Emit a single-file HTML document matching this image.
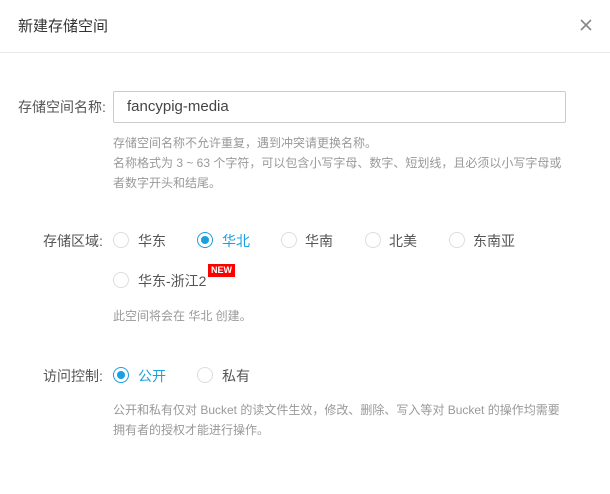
<!DOCTYPE html>
<html><head><meta charset="utf-8"><style>
*{margin:0;padding:0;box-sizing:border-box}
body{width:610px;height:494px;background:#fff;position:relative;overflow:hidden;font-family:"Liberation Sans","Noto Sans CJK SC",sans-serif;color:#333}
.a{position:absolute;white-space:nowrap}
.t{font-size:15px;color:#333;left:18px;top:15px}
.hr{position:absolute;left:0;top:52px;width:610px;height:1px;background:#e8e8e8}
.lbl{font-size:14px;color:#555}
.inp{position:absolute;left:113px;top:91px;width:453px;height:32px;border:1px solid #ccc;border-radius:2px;font-size:15px;color:#444;padding:0 13px;line-height:30px}
.help{font-size:12px;color:#999;line-height:20px}
.r{position:absolute;width:16px;height:16px;border:1px solid #ddd;border-radius:50%}
.r.on{border-color:#1a9fe0}
.r.on:after{content:"";position:absolute;left:3px;top:3px;width:8px;height:8px;border-radius:50%;background:#1a9fe0}
.rl{font-size:14px;color:#555}
.blue{color:#1a9fe0}
.new{position:absolute;left:208px;top:264px;width:27px;height:13px;background:#f00;color:#fff;font-size:9px;font-weight:bold;text-align:center;line-height:13px}
</style></head><body>
<div class="a t">新建存储空间</div>
<svg class="a" style="left:580px;top:19px" width="12" height="12" viewBox="0 0 12 12"><path d="M1 1L11 11M11 1L1 11" stroke="#888" stroke-width="1.6"/></svg>
<div class="hr"></div>
<div class="a lbl" style="left:18px;top:97px">存储空间名称:</div>
<div class="inp">fancypig-media</div>
<div class="a help" style="left:113px;top:133px">存储空间名称不允许重复，遇到冲突请更换名称。<br>名称格式为 3 ~ 63 个字符，可以包含小写字母、数字、短划线，且必须以小写字母或<br>者数字开头和结尾。</div>

<div class="a lbl" style="left:43px;top:231px">存储区域:</div>
<div class="r" style="left:113px;top:232px"></div><div class="a rl" style="left:138px;top:231px">华东</div>
<div class="r on" style="left:197px;top:232px"></div><div class="a rl blue" style="left:222px;top:231px">华北</div>
<div class="r" style="left:281px;top:232px"></div><div class="a rl" style="left:305px;top:231px">华南</div>
<div class="r" style="left:365px;top:232px"></div><div class="a rl" style="left:389px;top:231px">北美</div>
<div class="r" style="left:449px;top:232px"></div><div class="a rl" style="left:473px;top:231px">东南亚</div>
<div class="r" style="left:113px;top:272px"></div><div class="a rl" style="left:138px;top:271px">华东-浙江2</div>
<div class="new">NEW</div>
<div class="a help" style="left:113px;top:306px">此空间将会在 华北 创建。</div>

<div class="a lbl" style="left:43px;top:366px">访问控制:</div>
<div class="r on" style="left:113px;top:367px"></div><div class="a rl blue" style="left:138px;top:366px">公开</div>
<div class="r" style="left:197px;top:367px"></div><div class="a rl" style="left:222px;top:366px">私有</div>
<div class="a help" style="left:113px;top:400px">公开和私有仅对 Bucket 的读文件生效，修改、删除、写入等对 Bucket 的操作均需要<br>拥有者的授权才能进行操作。</div>
</body></html>
